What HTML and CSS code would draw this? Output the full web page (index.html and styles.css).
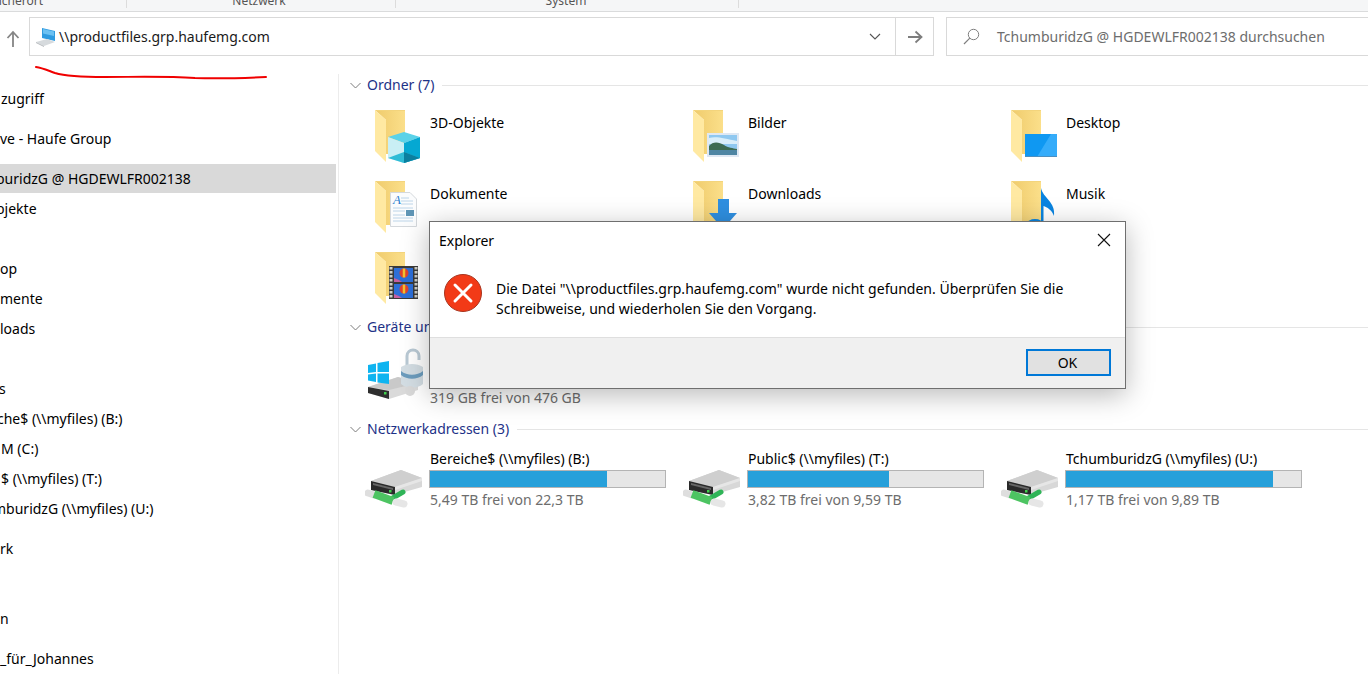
FILE: index.html
```html
<!DOCTYPE html>
<html lang="de">
<head>
<meta charset="utf-8">
<title>Explorer</title>
<link rel="stylesheet" href="styles.css">
</head>
<body>
<svg class="defs" width="0" height="0" aria-hidden="true">
  <defs>
    <linearGradient id="fb" x1="0" x2="1" y1="0" y2="0"><stop offset="0" stop-color="#efcb6c"/><stop offset="1" stop-color="#fbdf8a"/></linearGradient>
    <symbol id="folder" viewBox="0 0 64 56">
      <path d="M10 2H40V46H21V12Z" fill="url(#fb)"/>
      <path d="M10 2L21 12V54L10 43Z" fill="#ffe9a2"/>
      <path d="M10 2H40V3H12Z" fill="#f3d47c"/>
    </symbol>
    <symbol id="netdrive" viewBox="0 0 64 62">
      <path d="M6 33L36 22L57 30V39L29 47L6 42Z" fill="#d8d8d8"/>
      <path d="M6 33L36 22L57 30L30 39Z" fill="#cfcfcf"/>
      <path d="M30 39L57 30V33L30 42Z" fill="#e6e6e6"/>
      <path d="M6 33L30 39V47L6 42Z" fill="#2a2a2a"/>
      <path d="M8 35L28 40V42L8 37Z" fill="#666"/>
      <rect x="24" y="42" width="2.500" height="2.500" fill="#3fd24c"/>
      <path d="M3 45L9 47" stroke="#dedede" stroke-width="7" stroke-linecap="round"/>
      <path d="M26 51L38 44" stroke="#2fb457" stroke-width="5" stroke-linecap="round"/>
      <path d="M9 46L28 53" stroke="#4dc462" stroke-width="8"/>
      <path d="M31 54L39 56" stroke="#e6e6e6" stroke-width="7" stroke-linecap="round"/>
    </symbol>
  </defs>
</svg>

<header class="ribbon">
  <div class="group group-first"><span class="group-label label-first">Speicherort</span></div>
  <div class="group group-net"><span class="group-label">Netzwerk</span></div>
  <div class="group group-sys"><span class="group-label">System</span></div>
</header>

<nav class="navbar">
  <svg class="up" width="14" height="18" viewBox="0 0 14 18"><path d="M7 17V2M1.5 8L7 2l5.500 6" fill="none" stroke="#858585" stroke-width="1.800"/></svg>
  <div class="address">
    <svg class="pc" width="22" height="20" viewBox="0 0 22 20">
      <path d="M7 1L20 4V14L7 11Z" fill="#2f9be0"/>
      <path d="M8 2L19 4.500V9L8 6.500Z" fill="#6cc1f2"/>
      <path d="M1 15L12 12L20 15L9 19Z" fill="#d6dadd"/>
      <path d="M1 15L9 19V20L1 16Z" fill="#b5b9bc"/>
    </svg>
    <span class="path">\\productfiles.grp.haufemg.com</span>
    <svg class="dropdown" width="12" height="7" viewBox="0 0 12 7"><path d="M1 1l5 5 5-5" fill="none" stroke="#555" stroke-width="1.100"/></svg>
    <div class="go">
      <svg width="16" height="14" viewBox="0 0 16 14"><path d="M1 7H14M8.500 1.500L14.500 7l-6 5.500" fill="none" stroke="#7d7d7d" stroke-width="1.800"/></svg>
    </div>
  </div>
  <div class="search">
    <svg class="lens" width="17" height="17" viewBox="0 0 17 17"><circle cx="10.500" cy="6.500" r="5.200" fill="none" stroke="#7f7f7f"/><path d="M6.800 10.200L1 16" stroke="#7f7f7f" stroke-width="1.200"/></svg>
    <span class="placeholder">TchumburidzG @ HGDEWLFR002138 durchsuchen</span>
  </div>
</nav>

<main class="layout">
  <aside class="sidebar">
    <div class="row nudge-1">zugriff</div>
    <div class="row gap">ve - Haufe Group</div>
    <div class="row gap selected"><span class="cut-4">buridzG @ HGDEWLFR002138</span></div>
    <div class="row"><span class="cut-4">bjekte</span></div>
    <div class="row"></div>
    <div class="row">op</div>
    <div class="row">mente</div>
    <div class="row">loads</div>
    <div class="row"></div>
    <div class="row"><span class="cut-1">s</span></div>
    <div class="row"><span class="cut-3">che$ (\\myfiles) (B:)</span></div>
    <div class="row nudge-1">M (C:)</div>
    <div class="row nudge-1">$ (\\myfiles) (T:)</div>
    <div class="row"><span class="cut-7">mburidzG (\\myfiles) (U:)</span></div>
    <div class="row gap">rk</div>
    <div class="row"></div>
    <div class="row gap">n</div>
    <div class="row gap">_für_Johannes</div>
  </aside>

  <section class="content">
    <div class="head">
      <svg class="chev" width="11" height="7" viewBox="0 0 11 7"><path d="M.5 1l5 5 5-5" fill="none" stroke="#7c7c7c"/></svg>
      <span class="head-title">Ordner (7)</span><span class="head-line"></span>
    </div>
    <div class="folders">
      <div class="folder">
        <svg class="ficon" width="64" height="56" viewBox="0 0 64 56">
          <use href="#folder" width="64" height="56"/>
          <path d="M39 24L55 29L39 35L23 29Z" fill="#5bd2e8"/>
          <path d="M23 29L39 35V55L23 50Z" fill="#c9eff5"/>
          <path d="M55 29L39 35V55L55 50Z" fill="#05a8d2"/>
          <path d="M39 44L55 50L39 55L23 50Z" fill="#2fbcd6"/>
          <path d="M39 44L55 50L39 55Z" fill="#0b7f9f"/>
        </svg>
        <span class="fname">3D-Objekte</span>
      </div>
      <div class="folder">
        <svg class="ficon" width="64" height="56" viewBox="0 0 64 56">
          <use href="#folder" width="64" height="56"/>
          <rect x="24" y="25" width="32" height="24" fill="#dfe8f3"/>
          <rect x="26" y="27" width="28" height="20" fill="#8fc8f0"/>
          <path d="M26 30C34 28 42 31 54 33V36H26Z" fill="#d9eefa"/>
          <path d="M26 38C30 33 36 34 41 37C45 40 50 40 54 41V47H26Z" fill="#3d6b52"/>
          <path d="M26 42H54V47H26Z" fill="#4f86a3"/>
        </svg>
        <span class="fname">Bilder</span>
      </div>
      <div class="folder">
        <svg class="ficon" width="64" height="56" viewBox="0 0 64 56">
          <use href="#folder" width="64" height="56"/>
          <rect x="24" y="26" width="32" height="23" fill="#0f98f2"/>
          <path d="M36 49L50 26H56V49Z" fill="#35acfa"/>
          <rect x="24" y="48" width="32" height="1" fill="#4c8fc0"/>
        </svg>
        <span class="fname">Desktop</span>
      </div>
      <div class="folder">
        <svg class="ficon" width="64" height="56" viewBox="0 0 64 56">
          <use href="#folder" width="64" height="56"/>
          <path d="M25.500 13.500H45L51.500 20V47.500H25.500Z" fill="#fbfcfd" stroke="#d4d8dc"/>
          <text class="doc-a" x="28" y="25">A</text>
          <path d="M36 19H44M36 22H48M36 25H48M28 29H48M28 32H40M28 36H40M28 39H48M28 42H48" stroke="#bcd4e8"/>
          <rect x="41" y="31" width="8" height="6" fill="#5f95b5"/>
        </svg>
        <span class="fname">Dokumente</span>
      </div>
      <div class="folder">
        <svg class="ficon" width="64" height="56" viewBox="0 0 64 56">
          <use href="#folder" width="64" height="56"/>
          <path d="M35 20H46V34H54L40 50L26 34H35Z" fill="#2f8fe0"/>
        </svg>
        <span class="fname">Downloads</span>
      </div>
      <div class="folder">
        <svg class="ficon" width="64" height="56" viewBox="0 0 64 56">
          <use href="#folder" width="64" height="56"/>
          <path d="M40 9C42 19 55 23 53 37C51 31 46 28 42.500 27V45H40Z" fill="#0a84e0"/>
          <ellipse cx="34" cy="45" rx="8" ry="5" fill="#0a84e0"/>
        </svg>
        <span class="fname">Musik</span>
      </div>
      <div class="folder">
        <svg class="ficon" width="64" height="56" viewBox="0 0 64 56">
          <use href="#folder" width="64" height="56"/>
          <rect x="24" y="16" width="29" height="33" fill="#3a3a3a"/>
          <path d="M26 17V48M51 17V48" stroke="#cfcfc8" stroke-width="3" stroke-dasharray="2.500 1.500"/>
          <rect x="29" y="18" width="19" height="14" fill="#2d6fd8"/>
          <rect x="29" y="34" width="19" height="14" fill="#2d6fd8"/>
          <circle cx="39" cy="23" r="4.500" fill="#e0442c"/>
          <circle cx="39" cy="39" r="4.500" fill="#e0442c"/>
          <path d="M39 18.500V27.500M39 34.500V43.500" stroke="#f2c230" stroke-width="2.500"/>
          <path d="M29 32V28L34 30L37 32ZM29 48V44L34 46L37 48Z" fill="#c45fa0"/>
        </svg>
        <span class="fname">Videos</span>
      </div>
    </div>

    <div class="head head-devices">
      <svg class="chev" width="11" height="7" viewBox="0 0 11 7"><path d="M.5 1l5 5 5-5" fill="none" stroke="#7c7c7c"/></svg>
      <span class="head-title">Geräte und Laufwerke (1)</span><span class="head-line"></span>
    </div>
    <div class="drives">
      <div class="drive">
        <svg class="dicon" width="64" height="60" viewBox="0 0 64 60">
          <path d="M3 41L33 31L53 37V44L24 53L3 47Z" fill="#dadada"/>
          <path d="M3 41L33 31L53 37L24 44Z" fill="#c9c9c9"/>
          <path d="M3 41L24 45V53L3 47Z" fill="#2e2e2e"/>
          <rect x="19" y="46" width="2.500" height="2.500" fill="#3fd24c"/>
          <path d="M3 19L11 17.500V26L3 27ZM12.500 17L24 15V26L12.500 26ZM3 28.500L11 27.500V36L3 34.500ZM12.500 27.500L24 27.500V38L12.500 36.500Z" fill="#0fb4f0"/>
          <path d="M42 19V10C42 2 54 2 54 10V14" fill="none" stroke="#b9c9d4" stroke-width="3"/>
          <path d="M36 21C42 17 52 17 58 21V38C52 43 42 43 36 38Z" fill="#d3dde3"/>
          <path d="M36 25C42 30 52 30 58 25V29C52 34 42 34 36 29Z" fill="#6c9cbd"/>
          <circle cx="45" cy="45" r="5" fill="#d8d8d8"/>
        </svg>
        <div class="dinfo">
          <div class="dname">SYSTEM (C:)</div>
          <div class="bar"><div class="fill" style="width:33%"></div></div>
          <div class="dfree">319 GB frei von 476 GB</div>
        </div>
      </div>
    </div>

    <div class="head head-network">
      <svg class="chev" width="11" height="7" viewBox="0 0 11 7"><path d="M.5 1l5 5 5-5" fill="none" stroke="#7c7c7c"/></svg>
      <span class="head-title">Netzwerkadressen (3)</span><span class="head-line"></span>
    </div>
    <div class="drives">
      <div class="drive">
        <svg class="dicon" width="64" height="60" viewBox="0 0 64 60"><use href="#netdrive" width="64" height="62"/></svg>
        <div class="dinfo">
          <div class="dname">Bereiche$ (\\myfiles) (B:)</div>
          <div class="bar"><div class="fill" style="width:75.300%"></div></div>
          <div class="dfree">5,49 TB frei von 22,3 TB</div>
        </div>
      </div>
      <div class="drive">
        <svg class="dicon" width="64" height="60" viewBox="0 0 64 60"><use href="#netdrive" width="64" height="62"/></svg>
        <div class="dinfo">
          <div class="dname">Public$ (\\myfiles) (T:)</div>
          <div class="bar"><div class="fill" style="width:60.200%"></div></div>
          <div class="dfree">3,82 TB frei von 9,59 TB</div>
        </div>
      </div>
      <div class="drive">
        <svg class="dicon" width="64" height="60" viewBox="0 0 64 60"><use href="#netdrive" width="64" height="62"/></svg>
        <div class="dinfo">
          <div class="dname">TchumburidzG (\\myfiles) (U:)</div>
          <div class="bar"><div class="fill" style="width:88.200%"></div></div>
          <div class="dfree">1,17 TB frei von 9,89 TB</div>
        </div>
      </div>
    </div>
  </section>
</main>

<svg class="scribble" width="240" height="20" viewBox="0 0 240 20"><path d="M1 2C8 3 14 6 20 8C30 11 50 12 70 12C100 12 130 11 160 13C185 14 210 13 231 12" fill="none" stroke="#f00000" stroke-width="2" stroke-linecap="round"/></svg>

<div class="dialog">
  <div class="dlg-title">
    <span>Explorer</span>
    <svg width="14" height="14" viewBox="0 0 14 14"><path d="M1 1l12 12M13 1L1 13" stroke="#111" stroke-width="1.100"/></svg>
  </div>
  <div class="dlg-body">
    <svg class="err" width="38" height="38" viewBox="0 0 38 38"><circle cx="19" cy="19" r="18.500" fill="#f23a17" stroke="#a8341e"/><path d="M11 11L27 27M27 11L11 27" stroke="#fff" stroke-width="3" stroke-linecap="round"/></svg>
    <p class="dlg-text">Die Datei "\\productfiles.grp.haufemg.com" wurde nicht gefunden. Überprüfen Sie die Schreibweise, und wiederholen Sie den Vorgang.</p>
  </div>
  <div class="dlg-foot"><button class="ok">OK</button></div>
</div>
</body>
</html>
```

FILE: styles.css
```css
* { box-sizing: border-box; }
html, body { margin: 0; padding: 0; }
body {
  position: relative;
  width: 1368px;
  height: 674px;
  overflow: hidden;
  background: #fff;
  color: #000;
  font-family: "Noto Sans", "Open Sans", sans-serif;
  font-size: 14px;
}
.defs { position: absolute; }

.ribbon {
  display: flex;
  height: 12px;
  background: #f5f6f7;
  border-bottom: 1px solid #dadbdc;
  overflow: hidden;
  font-size: 12px;
  color: #555;
}
.group { height: 8px; border-right: 1px solid #dcdcdc; text-align: center; }
.group-first { width: 127px; text-align: left; overflow: hidden; white-space: nowrap; }
.group-net { width: 269px; padding-right: 4px; }
.group-sys { width: 343px; padding-right: 2px; }
.group-label { display: block; line-height: 10px; margin-top: -4px; }
.label-first { margin-left: -22px; }

.navbar {
  display: flex;
  align-items: flex-start;
  height: 62px;
  padding-top: 5px;
}
.up { margin: 13px 9px 0 6px; flex: none; }
.address {
  display: flex;
  align-items: center;
  width: 905px;
  height: 39px;
  border: 1px solid #d9d9d9;
  padding-left: 5px;
  flex: none;
}
.pc { flex: none; margin-right: 2px; }
.path { flex: 1; color: #1a1a1a; margin-top: -1px; }
.dropdown { margin-right: 14px; }
.go {
  width: 38px;
  height: 37px;
  border-left: 1px solid #d9d9d9;
  display: flex;
  align-items: center;
  justify-content: center;
}
.search {
  display: flex;
  align-items: center;
  flex: 1;
  height: 39px;
  margin-left: 12px;
  margin-right: -4px;
  border: 1px solid #d9d9d9;
  padding-left: 16px;
}
.lens { margin-right: 17px; }
.placeholder { color: #6d6d6d; white-space: nowrap; }

.layout { display: flex; height: 600px; }
.sidebar {
  width: 339px;
  flex: none;
  padding: 10px 2px 0 0;
  border-right: 1px solid #ececec;
  overflow: hidden;
}
.row { height: 30px; line-height: 30px; white-space: nowrap; overflow: hidden; }
.gap { margin-top: 10px; }
.row.selected { margin-top: 10px; height: 29px; line-height: 29px; margin-bottom: 1px; background: #d9d9d9; }
.nudge-1 { padding-left: 1px; }
.cut-1, .cut-3, .cut-4, .cut-7 { display: inline-block; }
.cut-1 { margin-left: -1px; }
.cut-3 { margin-left: -3px; }
.cut-4 { margin-left: -4px; }
.cut-7 { margin-left: -7px; }

.content { flex: 1; min-width: 0; }
.head {
  display: flex;
  align-items: center;
  height: 22px;
  padding-left: 11px;
  color: #1e3287;
  white-space: nowrap;
}
.chev { flex: none; margin-right: 6px; }
.head-title { margin-bottom: 2px; }
.head-line { flex: 1; height: 1px; background: #e5e5e5; margin-left: 8px; }
.head-devices { margin-top: 1px; }
.head-network { margin-top: 10px; }

.folders {
  display: grid;
  grid-template-columns: repeat(3, 318px);
  grid-auto-rows: 71px;
  margin-top: 6px;
  padding-left: 26px;
}
.folder { display: flex; align-items: flex-start; }
.ficon { flex: none; margin-top: 6px; }
.fname { margin-top: 11px; margin-left: 1px; line-height: 20px; }
.doc-a { font-family: "Liberation Serif", serif; font-style: italic; font-size: 13px; fill: #2a7fd0; }

.drives {
  display: grid;
  grid-template-columns: repeat(3, 318px);
  margin-top: 8px;
  padding-left: 26px;
}
.drive { display: flex; }
.dicon { flex: none; }
.dinfo { width: 237px; }
.dname, .dfree { line-height: 20px; padding-left: 1px; white-space: nowrap; }
.dname { padding-top: 1px; height: 21px; }
.dfree { color: #6d6d6d; padding-top: 2px; height: 22px; }
.bar { height: 18px; margin-top: 1px; border: 1px solid #b4b4b4; background: #e6e6e6; }
.fill { height: 100%; background: #26a0da; }

.scribble { position: absolute; left: 35px; top: 65px; }

.dialog {
  position: absolute;
  left: 429px;
  top: 221px;
  width: 697px;
  height: 168px;
  display: flex;
  flex-direction: column;
  background: #fff;
  border: 1px solid #6f6f6f;
  box-shadow: 0 6px 26px rgba(0, 0, 0, .28);
}
.dlg-title {
  display: flex;
  align-items: center;
  justify-content: space-between;
  height: 36px;
  padding: 0 14px 0 9px;
}
.dlg-body { display: flex; flex: 1; padding: 16px 40px 0 14px; }
.err { flex: none; margin-right: 14px; }
.dlg-text { margin: 5px 0 0; line-height: 20px; letter-spacing: .02px; }
.dlg-foot {
  height: 51px;
  display: flex;
  justify-content: flex-end;
  align-items: flex-start;
  padding: 11px 14px 0 0;
  background: #f0f0f0;
  border-top: 1px solid #dfdfdf;
}
.ok {
  width: 85px;
  height: 27px;
  padding: 0 2px 0 0;
  background: #e1e1e1;
  border: 2px solid #0078d7;
  font: inherit;
  color: #000;
}
```
